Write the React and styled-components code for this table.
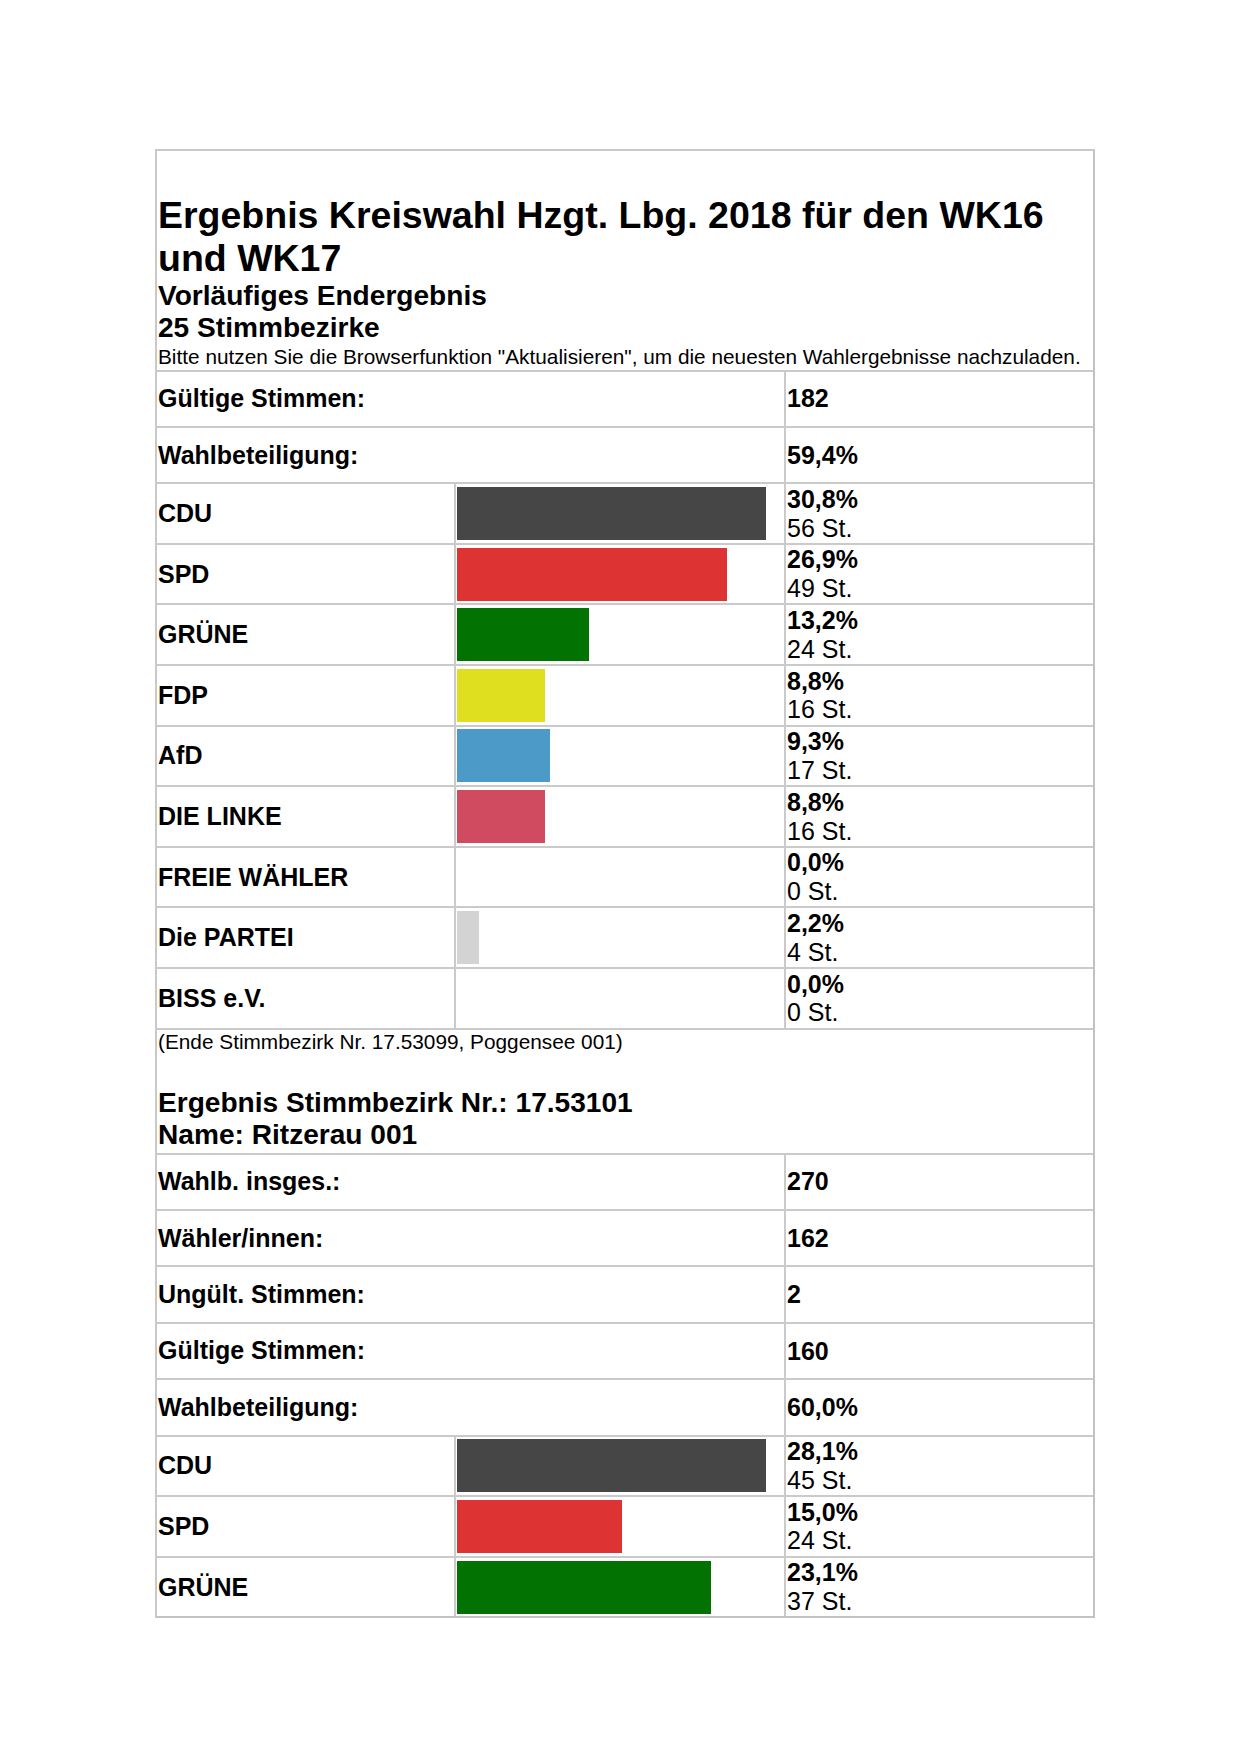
import React from "react";
import styled, { createGlobalStyle } from "styled-components";

const Global = createGlobalStyle`
  html, body { margin: 0; padding: 0; background: #ffffff; }
  body { font-family: "Liberation Sans", Arial, Helvetica, sans-serif; color: #000; }
`;

const Page = styled.div`
  width: 1240px;
  min-height: 1754px;
  padding-top: 149px;
  padding-left: 155px;
  box-sizing: border-box;
`;

const Frame = styled.div`
  width: 940px;
  box-sizing: border-box;
  border: 2px solid #c9c9c9;
  border-right-color: #c2c2c2;
  border-bottom-color: #c2c2c2;
`;

const HeaderCell = styled.div`
  padding: ${(p) => p.$pad};
  box-sizing: border-box;
  border-top: ${(p) => (p.$top ? "2px solid #cacaca" : "none")};
`;

const Title = styled.h1`
  margin: 0;
  padding-left: 1px;
  font-size: 37.5px;
  line-height: 43px;
  font-weight: bold;
`;

const SubTitle = styled.h2`
  margin: 0;
  padding-left: 1px;
  font-size: 28.1px;
  line-height: 32.5px;
  font-weight: bold;
`;

const Note = styled.div`
  padding-left: 1px;
  font-size: 20.8px;
  line-height: 24px;
  margin-bottom: ${(p) => p.$after || 0}px;
`;

const StatRow = styled.div`
  display: grid;
  grid-template-columns: 627px 1fr;
  height: 56.4px;
  box-sizing: border-box;
  border-top: 2px solid #cacaca;
  font-size: 25px;
  font-weight: bold;
`;

const PartyRow = styled.div`
  display: grid;
  grid-template-columns: 297px 330px 1fr;
  height: 60.6px;
  box-sizing: border-box;
  border-top: 2px solid #cacaca;
  font-size: 25px;
`;

const Label = styled.div`
  display: flex;
  align-items: center;
  padding-left: 1px;
  font-weight: bold;
`;

const BarCell = styled.div`
  display: flex;
  align-items: center;
  padding-left: 1px;
  border-left: 2px solid #cacaca;
`;

const Bar = styled.div`
  height: 53px;
  background: ${(p) => p.$color};
`;

const Value = styled.div`
  display: flex;
  flex-direction: column;
  justify-content: center;
  padding-left: 1px;
  border-left: 2px solid #cacaca;
  line-height: 28.8px;
  font-weight: ${(p) => (p.$bold ? "bold" : "normal")};
`;

const Pct = styled.span`
  font-weight: bold;
`;

const Votes = styled.span`
  font-weight: normal;
`;

const COLORS = {
  CDU: "#464646",
  SPD: "#dd3333",
  "GRÜNE": "#027302",
  FDP: "#dfdf1f",
  AfD: "#4b9ac7",
  "DIE LINKE": "#d04a60",
  "FREIE WÄHLER": "#e87f1e",
  "Die PARTEI": "#d3d3d3",
  "BISS e.V.": "#999999",
};

const MAX_BAR = 309;

function Stat({ label, value }) {
  return (
    <StatRow>
      <Label>{label}</Label>
      <Value $bold>{value}</Value>
    </StatRow>
  );
}

function Parties({ rows }) {
  const max = Math.max(...rows.map((r) => r.p));
  return rows.map((r) => (
    <PartyRow key={r.name}>
      <Label>{r.name}</Label>
      <BarCell>
        {r.p > 0 && (
          <Bar $color={COLORS[r.name]} style={{ width: `${(r.p / max) * MAX_BAR}px` }} />
        )}
      </BarCell>
      <Value>
        <Pct>{r.p.toFixed(1).replace(".", ",")}%</Pct>
        <Votes>{r.v} St.</Votes>
      </Value>
    </PartyRow>
  ));
}

const section1 = [
  { name: "CDU", p: 30.8, v: 56 },
  { name: "SPD", p: 26.9, v: 49 },
  { name: "GRÜNE", p: 13.2, v: 24 },
  { name: "FDP", p: 8.8, v: 16 },
  { name: "AfD", p: 9.3, v: 17 },
  { name: "DIE LINKE", p: 8.8, v: 16 },
  { name: "FREIE WÄHLER", p: 0.0, v: 0 },
  { name: "Die PARTEI", p: 2.2, v: 4 },
  { name: "BISS e.V.", p: 0.0, v: 0 },
];

const section2 = [
  { name: "CDU", p: 28.1, v: 45 },
  { name: "SPD", p: 15.0, v: 24 },
  { name: "GRÜNE", p: 23.1, v: 37 },
];

export default function App() {
  return (
    <>
      <Global />
      <Page>
        <Frame>
          <HeaderCell $pad="42.5px 0 1px 0">
            <Title>
              Ergebnis Kreiswahl Hzgt. Lbg. 2018 für den WK16
              <br />
              und WK17
            </Title>
            <SubTitle>Vorläufiges Endergebnis</SubTitle>
            <SubTitle>25 Stimmbezirke</SubTitle>
            <Note>
              Bitte nutzen Sie die Browserfunktion "Aktualisieren", um die neuesten Wahlergebnisse nachzuladen.
            </Note>
          </HeaderCell>
          <Stat label="Gültige Stimmen:" value="182" />
          <Stat label="Wahlbeteiligung:" value="59,4%" />
          <Parties rows={section1} />
          <HeaderCell $top $pad="0 0 1px 0">
            <Note $after={33}>(Ende Stimmbezirk Nr. 17.53099, Poggensee 001)</Note>
            <SubTitle>Ergebnis Stimmbezirk Nr.: 17.53101</SubTitle>
            <SubTitle>Name: Ritzerau 001</SubTitle>
          </HeaderCell>
          <Stat label="Wahlb. insges.:" value="270" />
          <Stat label="Wähler/innen:" value="162" />
          <Stat label="Ungült. Stimmen:" value="2" />
          <Stat label="Gültige Stimmen:" value="160" />
          <Stat label="Wahlbeteiligung:" value="60,0%" />
          <Parties rows={section2} />
        </Frame>
      </Page>
    </>
  );
}
